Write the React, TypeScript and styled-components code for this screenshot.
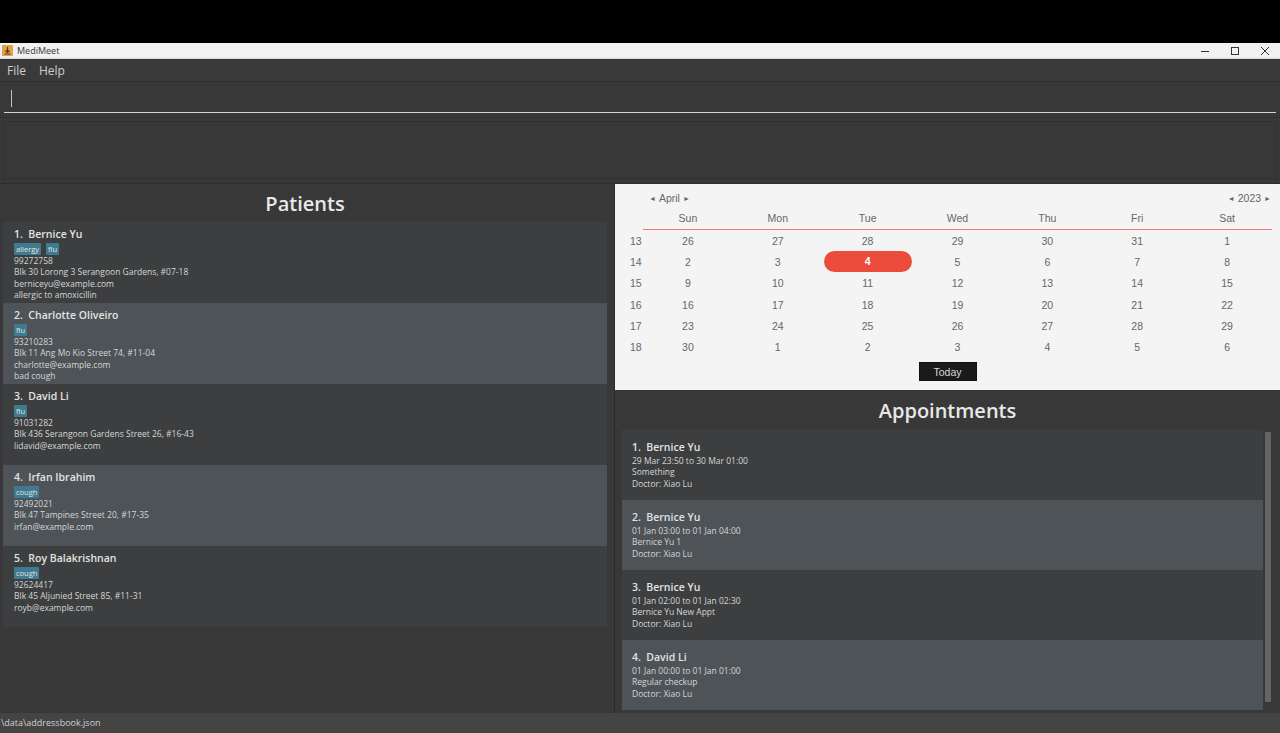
import React from "react";
import styled, { createGlobalStyle } from "styled-components";

const Global = createGlobalStyle`
  html, body { margin: 0; padding: 0; background: #000; }
  #root { width: 1280px; height: 733px; overflow: hidden; }
  * { box-sizing: border-box; }
`;

const Page = styled.div`
  width: 1280px;
  height: 733px;
  display: flex;
  flex-direction: column;
  background: #000;
  font-family: "Open Sans", "Noto Sans", sans-serif;
`;
const TopBlack = styled.div`height: 43px; flex: none; background: #000;`;
const TitleBar = styled.div`
  height: 16px;
  flex: none;
  display: flex;
  align-items: center;
  background: #f1f1f1;
  padding-left: 2px;
  border-bottom: 1px solid #d8d8d8;
`;
const AppIcon = styled.svg`width: 11px; height: 11px; flex: none;`;
const TitleText = styled.span`
  margin-left: 4px;
  flex: 1;
  font-size: 9px;
  color: #333;
`;
const WinButtons = styled.div`display: flex; align-items: center; margin-right: 10px; gap: 20px;`;
const WinIcon = styled.svg`width: 10px; height: 10px; display: block;`;
const Menu = styled.div`
  height: 23px;
  flex: none;
  display: flex;
  align-items: center;
  gap: 13px;
  padding-left: 7px;
  background: #3a3a3a;
  border-bottom: 1px solid #303030;
  font-size: 12px;
  color: #cfcfcf;
`;
const CommandBox = styled.div`
  height: 36px;
  flex: none;
  padding: 0 4px;
  background: #383838;
  border-bottom: 1px solid #303030;
`;
const CommandInput = styled.div`
  height: 31px;
  padding: 8px 0 0 7px;
  border-bottom: 1px solid #d4d4d4;
`;
const Caret = styled.div`width: 1px; height: 17px; background: #c4c4c4;`;
const ResultBox = styled.div`
  height: 66px;
  flex: none;
  padding: 3px 3px 4px 3px;
  background: #383838;
  border-bottom: 1px solid #2b2b2b;
`;
const ResultInner = styled.div`
  height: 100%;
  border: 1px solid #303030;
  background: #383838;
`;
const Main = styled.div`
  height: 529px;
  flex: none;
  display: flex;
  background: #383838;
`;
const LeftPane = styled.div`
  width: 615px;
  flex: none;
  padding: 0 7px 0 3px;
  border-right: 1px solid #2b2b2b;
  display: flex;
  flex-direction: column;
`;
const PaneTitle = styled.div<{ $h: number }>`
  height: ${(p) => p.$h}px;
  flex: none;
  display: flex;
  align-items: center;
  justify-content: center;
  font-size: 20px;
  font-weight: 600;
  color: #e8e8e8;
`;
const RightPane = styled.div`
  flex: 1;
  display: flex;
  flex-direction: column;
  min-width: 0;
`;
const Card = styled.div<{ $alt: boolean; $h: number; $pt: number }>`
  height: ${(p) => p.$h}px;
  flex: none;
  padding: ${(p) => p.$pt}px 0 0 10px;
  background: ${(p) => (p.$alt ? "#4d5356" : "#3c3e3f")};
`;
const PatientCard = styled(Card)`padding-left: 11px;`;
const Name = styled.div`
  font-size: 10.5px;
  font-weight: 600;
  line-height: 14px;
  color: #e3e3e3;
  white-space: pre;
`;
const Tags = styled.div`display: flex; gap: 5px; margin-top: 2px; height: 12px;`;
const Tag = styled.span`
  height: 12px;
  padding: 0 2px;
  background: #3e7b91;
  border-radius: 1px;
  font-size: 7.5px;
  line-height: 12px;
  color: #e4e4e4;
`;
const Line = styled.div`
  font-size: 8.5px;
  line-height: 11.35px;
  color: #d6d6d6;
  white-space: pre;
`;
const Details = styled.div`margin-top: 0;`;
const ApptDetails = styled.div`margin-top: 1px;`;

const Calendar = styled.div`
  height: 206px;
  flex: none;
  background: #f4f4f4;
  font-family: "Liberation Sans", Arial, sans-serif;
  color: #666;
  font-size: 10.5px;
  display: flex;
  flex-direction: column;
  padding-right: 8px;
`;
const CalHead = styled.div`
  height: 27px;
  flex: none;
  display: flex;
  justify-content: space-between;
  align-items: center;
  padding: 1px 0 0 31px;
  margin-right: -2px;
`;
const Arrow = styled.span`font-size: 7px; color: #666; margin: 0 3px;`;
const Spin = styled.span`display: flex; align-items: center;`;
const DayRow = styled.div`
  height: 18px;
  margin-left: 28px;
  display: grid;
  grid-template-columns: repeat(7, 1fr);
  border-bottom: 1px solid #ee7a6f;
  flex: none;
  height: 19px;
  align-items: flex-start;
  line-height: 15px;
`;
const Centered = styled.div`text-align: center;`;
const Week = styled.div`
  height: 21.3px;
  flex: none;
  display: grid;
  grid-template-columns: 28px repeat(7, 1fr);
  align-items: center;
`;
const WeekNo = styled.div`padding-left: 15px;`;
const Today = styled.div`
  height: 21px;
  margin: 0 1px;
  background: #eb4c3c;
  border-radius: 11px;
  color: #fff;
  font-weight: 700;
  text-align: center;
  line-height: 21px;
`;
const TodayRow = styled.div`
  display: flex;
  justify-content: center;
  flex: none;
  margin-top: 4px;
  padding-left: 8px;
`;
const TodayButton = styled.div`
  width: 58px;
  height: 19px;
  background: #1a1a1a;
  color: #d8d8d8;
  text-align: center;
  line-height: 18px;
  border: 1px solid #111;
`;
const ApptArea = styled.div`
  flex: 1;
  display: flex;
  flex-direction: column;
`;
const ListRow = styled.div`
  display: flex;
  padding-left: 7px;
`;
const ApptList = styled.div`width: 641px; flex: none; display: flex; flex-direction: column;`;
const Scrollbar = styled.div`
  width: 6px;
  height: 270px;
  margin: 2px 0 0 2px;
  border-radius: 1px;
  background: #656565;
`;
const Status = styled.div`
  flex: 1;
  background: #444;
  padding-left: 1px;
  font-size: 9px;
  line-height: 20px;
  color: #cfcfcf;
`;

const patients = [
  { n: "1.  Bernice Yu", t: ["allergy", "flu"], l: ["99272758", "Blk 30 Lorong 3 Serangoon Gardens, #07-18", "berniceyu@example.com", "allergic to amoxicillin"] },
  { n: "2.  Charlotte Oliveiro", t: ["flu"], l: ["93210283", "Blk 11 Ang Mo Kio Street 74, #11-04", "charlotte@example.com", "bad cough"] },
  { n: "3.  David Li", t: ["flu"], l: ["91031282", "Blk 436 Serangoon Gardens Street 26, #16-43", "lidavid@example.com"] },
  { n: "4.  Irfan Ibrahim", t: ["cough"], l: ["92492021", "Blk 47 Tampines Street 20, #17-35", "irfan@example.com"] },
  { n: "5.  Roy Balakrishnan", t: ["cough"], l: ["92624417", "Blk 45 Aljunied Street 85, #11-31", "royb@example.com"] },
];
const appts = [
  { n: "1.  Bernice Yu", l: ["29 Mar 23:50 to 30 Mar 01:00", "Something", "Doctor: Xiao Lu"] },
  { n: "2.  Bernice Yu", l: ["01 Jan 03:00 to 01 Jan 04:00", "Bernice Yu 1", "Doctor: Xiao Lu"] },
  { n: "3.  Bernice Yu", l: ["01 Jan 02:00 to 01 Jan 02:30", "Bernice Yu New Appt", "Doctor: Xiao Lu"] },
  { n: "4.  David Li", l: ["01 Jan 00:00 to 01 Jan 01:00", "Regular checkup", "Doctor: Xiao Lu"] },
];
const days = ["Sun", "Mon", "Tue", "Wed", "Thu", "Fri", "Sat"];
const weeks: [number, number[]][] = [
  [13, [26, 27, 28, 29, 30, 31, 1]],
  [14, [2, 3, 4, 5, 6, 7, 8]],
  [15, [9, 10, 11, 12, 13, 14, 15]],
  [16, [16, 17, 18, 19, 20, 21, 22]],
  [17, [23, 24, 25, 26, 27, 28, 29]],
  [18, [30, 1, 2, 3, 4, 5, 6]],
];

export default function App() {
  return (
    <Page>
      <Global />
      <TopBlack />
      <TitleBar>
        <AppIcon viewBox="0 0 11 11">
          <rect width="11" height="11" fill="#e0a24c" />
          <path d="M5.5 2v5M3.5 5.5l2 2 2-2M2.5 9h6" stroke="#5a3a10" strokeWidth="1.2" fill="none" />
        </AppIcon>
        <TitleText>MediMeet</TitleText>
        <WinButtons>
          <WinIcon viewBox="0 0 10 10"><path d="M1 5.5h8" stroke="#333" strokeWidth="1" /></WinIcon>
          <WinIcon viewBox="0 0 10 10"><rect x="1.5" y="1.5" width="7" height="7" stroke="#333" strokeWidth="1" fill="none" /></WinIcon>
          <WinIcon viewBox="0 0 10 10"><path d="M1 1l8 8M9 1l-8 8" stroke="#333" strokeWidth="1" /></WinIcon>
        </WinButtons>
      </TitleBar>
      <Menu><span>File</span><span>Help</span></Menu>
      <CommandBox>
        <CommandInput><Caret /></CommandInput>
      </CommandBox>
      <ResultBox><ResultInner /></ResultBox>
      <Main>
        <LeftPane>
          <PaneTitle $h={38}>Patients</PaneTitle>
          {patients.map((p, i) => (
            <PatientCard key={p.n} $alt={i % 2 === 1} $h={81} $pt={5}>
              <Name>{p.n}</Name>
              <Tags>{p.t.map((t) => <Tag key={t}>{t}</Tag>)}</Tags>
              <Details>{p.l.map((l) => <Line key={l}>{l}</Line>)}</Details>
            </PatientCard>
          ))}
        </LeftPane>
        <RightPane>
          <Calendar>
            <CalHead>
              <Spin><Arrow>◄</Arrow>April<Arrow>►</Arrow></Spin>
              <Spin><Arrow>◄</Arrow>2023<Arrow>►</Arrow></Spin>
            </CalHead>
            <DayRow>{days.map((d) => <Centered key={d}>{d}</Centered>)}</DayRow>
            {weeks.map(([w, ds]) => (
              <Week key={w}>
                <WeekNo>{w}</WeekNo>
                {ds.map((d, i) =>
                  w === 14 && d === 4 ? <Today key={i}>{d}</Today> : <Centered key={i}>{d}</Centered>
                )}
              </Week>
            ))}
            <TodayRow><TodayButton>Today</TodayButton></TodayRow>
          </Calendar>
          <ApptArea>
            <PaneTitle $h={40}>Appointments</PaneTitle>
            <ListRow>
              <ApptList>
                {appts.map((a, i) => (
                  <Card key={a.n} $alt={i % 2 === 1} $h={70} $pt={10}>
                    <Name>{a.n}</Name>
                    <ApptDetails>{a.l.map((l) => <Line key={l}>{l}</Line>)}</ApptDetails>
                  </Card>
                ))}
              </ApptList>
              <Scrollbar />
            </ListRow>
          </ApptArea>
        </RightPane>
      </Main>
      <Status>\data\addressbook.json</Status>
    </Page>
  );
}
